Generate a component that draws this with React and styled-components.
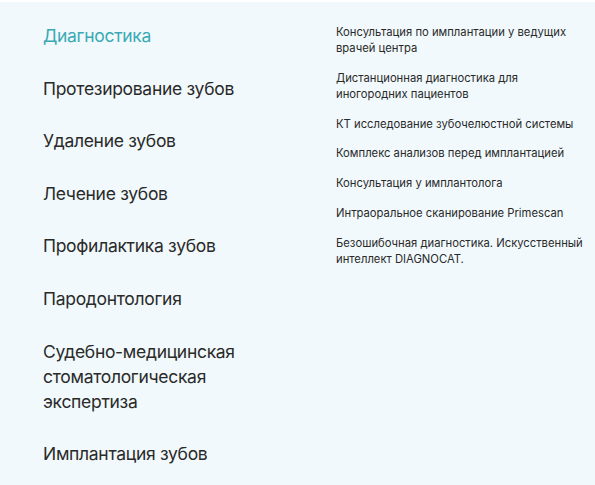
import React from "react";
import styled, { createGlobalStyle } from "styled-components";

const GlobalStyle = createGlobalStyle`
  body {
    margin: 0;
    background: #ffffff;
    font-family: Inter, "Noto Sans", sans-serif;
  }
`;

const Panel = styled.section`
  margin-top: 2px;
  min-height: 483px;
  box-sizing: border-box;
  background: #f1f9fc;
  display: grid;
  grid-template-columns: 293px 1fr;
  padding: 21px 0 0 43px;
`;

const Categories = styled.ul`
  list-style: none;
  margin: 0;
  padding: 0;
  display: flex;
  flex-direction: column;
  gap: 27.6px;
`;

const Category = styled.li`
  font-size: 17.5px;
  line-height: 25px;
  letter-spacing: -0.3px;
  color: ${({ active }) => (active ? "#3aa9b5" : "#2a2a2a")};
  max-width: 220px;
  cursor: pointer;
`;

const Services = styled.ul`
  list-style: none;
  margin: 0;
  padding: 1px 0 0;
  display: flex;
  flex-direction: column;
  gap: 13.8px;
  max-width: 252px;
`;

const Service = styled.li`
  font-size: 11.25px;
  line-height: 16px;
  color: #2a2a2a;
  cursor: pointer;
`;

const categories = [
  "Диагностика",
  "Протезирование зубов",
  "Удаление зубов",
  "Лечение зубов",
  "Профилактика зубов",
  "Пародонтология",
  "Судебно-медицинская стоматологическая экспертиза",
  "Имплантация зубов",
];

const services = [
  "Консультация по имплантации у ведущих врачей центра",
  "Дистанционная диагностика для иногородних пациентов",
  "КТ исследование зубочелюстной системы",
  "Комплекс анализов перед имплантацией",
  "Консультация у имплантолога",
  "Интраоральное сканирование Primescan",
  "Безошибочная диагностика. Искусственный интеллект DIAGNOCAT.",
];

const App = () => (
  <>
    <GlobalStyle />
    <Panel>
      <Categories>
        {categories.map((c, i) => (
          <Category key={c} active={i === 0}>
            {c}
          </Category>
        ))}
      </Categories>
      <Services>
        {services.map((s) => (
          <Service key={s}>{s}</Service>
        ))}
      </Services>
    </Panel>
  </>
);

export default App;
